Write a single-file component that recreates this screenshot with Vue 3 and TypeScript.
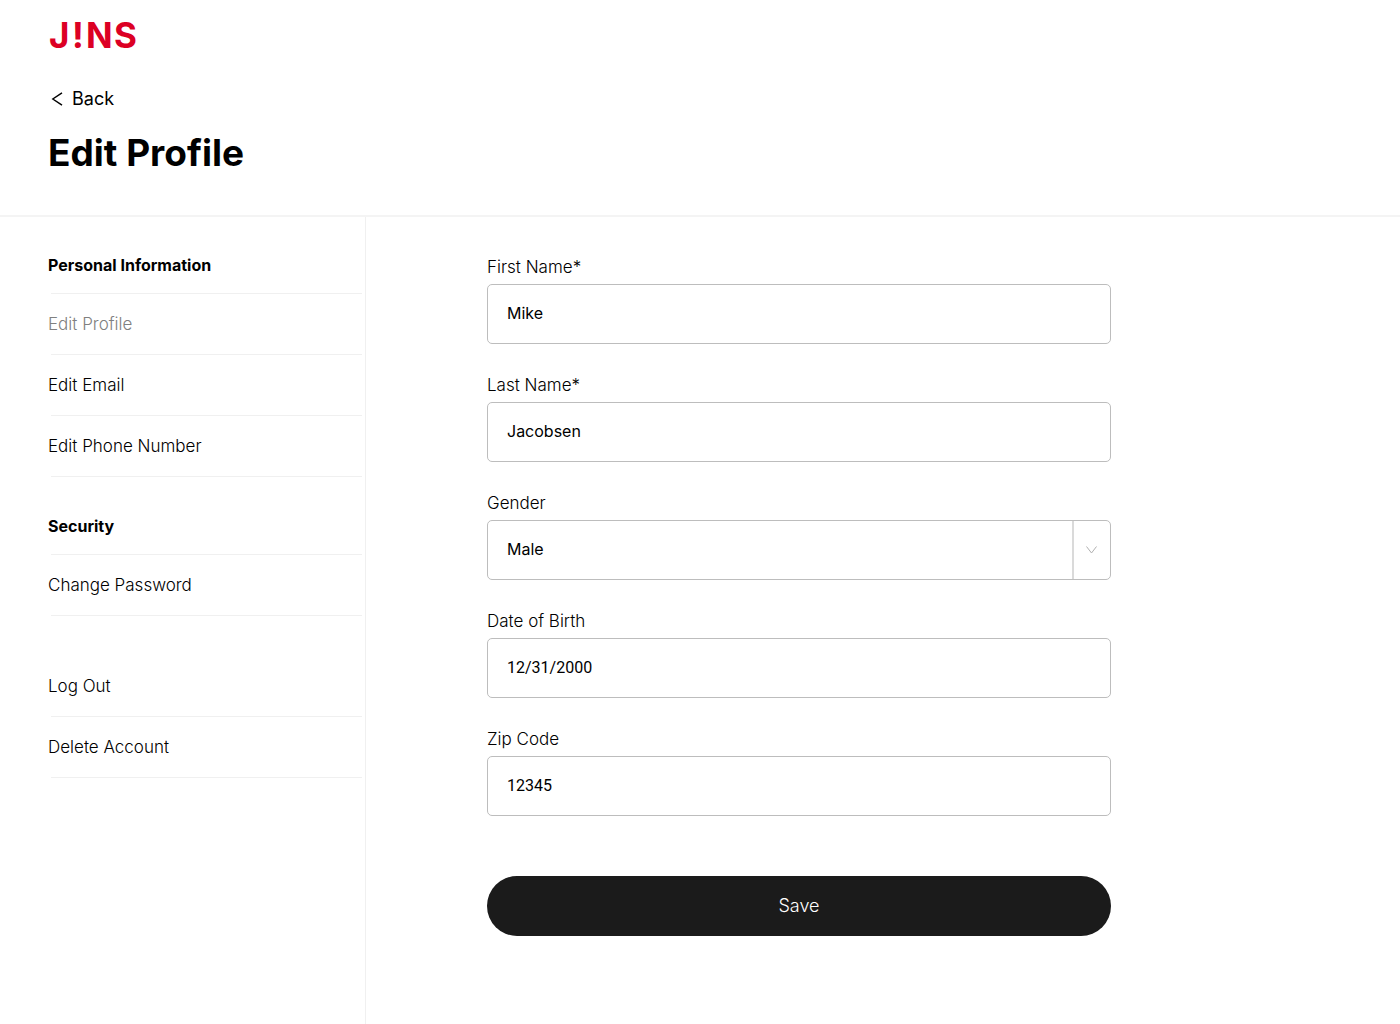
<script setup lang="ts">
import { ref } from 'vue'

interface MenuGroup {
  title?: string
  items: string[]
}

interface TextField {
  id: string
  label: string
  value: string
  numeric?: boolean
  options?: string[]
}

const active = 'Edit Profile'

const groups: MenuGroup[] = [
  { title: 'Personal Information', items: ['Edit Profile', 'Edit Email', 'Edit Phone Number'] },
  { title: 'Security', items: ['Change Password'] },
  { items: ['Log Out', 'Delete Account'] },
]

const fields = ref<TextField[]>([
  { id: 'first-name', label: 'First Name*', value: 'Mike' },
  { id: 'last-name', label: 'Last Name*', value: 'Jacobsen' },
  { id: 'gender', label: 'Gender', value: 'Male', options: ['Male', 'Female', 'Other'] },
  { id: 'birth-date', label: 'Date of Birth', value: '12/31/2000', numeric: true },
  { id: 'zip-code', label: 'Zip Code', value: '12345', numeric: true },
])
</script>

<template>
  <div class="page">
    <header class="header">
      <a class="logo" href="#" aria-label="JINS home">
        <svg width="96" height="48" viewBox="0 0 96 48" aria-hidden="true">
          <text y="37" x="1 24 38 66">J!NS</text>
        </svg>
      </a>
      <a class="back" href="#">
        <svg width="12" height="14" viewBox="0 0 12 14" fill="none" stroke="#000" stroke-width="1.4" aria-hidden="true">
          <path d="M11 .8 1.800 7l9.200 6.200" />
        </svg>
        <span>Back</span>
      </a>
      <h1>Edit Profile</h1>
    </header>

    <div class="body">
      <nav class="sidebar" aria-label="Account">
        <section v-for="(group, i) in groups" :key="i" class="group">
          <h2 v-if="group.title">{{ group.title }}</h2>
          <ul>
            <li v-for="item in group.items" :key="item">
              <a href="#" :class="{ active: item === active }">{{ item }}</a>
            </li>
          </ul>
        </section>
      </nav>

      <main class="content">
        <form class="form" @submit.prevent>
          <div v-for="field in fields" :key="field.id" class="field">
            <label :for="field.id">{{ field.label }}</label>
            <div v-if="field.options" class="select">
              <select :id="field.id" v-model="field.value">
                <option v-for="option in field.options" :key="option">{{ option }}</option>
              </select>
              <span class="arrow">
                <svg width="12" height="8" viewBox="0 0 12 8" fill="none" stroke="#b0b0b0" aria-hidden="true">
                  <path d="M.5 .5l5 6.500 5-6.500" />
                </svg>
              </span>
            </div>
            <input v-else :id="field.id" v-model="field.value" type="text" :class="{ numeric: field.numeric }" />
          </div>
          <button class="save" type="submit">Save</button>
        </form>
      </main>
    </div>
  </div>
</template>

<style>
body {
  background: #fff;
}
</style>

<style scoped>
.page {
  display: flex;
  flex-direction: column;
  min-height: 100vh;
  color: #000;
  font: 16px/24px Inter, "Liberation Sans", sans-serif;
}

.page *,
.page {
  box-sizing: border-box;
}

a {
  color: inherit;
  text-decoration: none;
}

.header {
  display: flex;
  flex-direction: column;
  align-items: flex-start;
  padding: 11px 48px 38px;
  border-bottom: 2px solid #f4f4f4;
}

.logo {
  display: block;
  height: 48px;
}

.logo text {
  fill: #dc0024;
  font: 700 35px Inter, sans-serif;
}

.back {
  display: flex;
  align-items: center;
  gap: 9px;
  margin-top: 28px;
  padding-left: 3px;
  font-size: 18px;
}

h1 {
  margin: 18px 0 0;
  font-size: 37px;
  line-height: 48px;
  font-weight: 700;
}

.body {
  display: flex;
  flex: 1;
}

.sidebar {
  flex: none;
  width: 366px;
  padding: 16px 3px 48px 48px;
  border-right: 1px solid #f0f0f0;
}

.group + .group {
  padding-top: 17px;
}

.group:last-child {
  padding-top: 40px;
}

h2 {
  margin: 0;
  padding-top: 20px;
  font-size: 16px;
  line-height: 24px;
  font-weight: 700;
}

h2::after,
li::after {
  content: "";
  display: block;
  height: 1px;
  margin-left: 3px;
  background: #f0f0f0;
}

h2::after {
  margin-top: 16px;
}

ul {
  margin: 0;
  padding: 0;
  list-style: none;
}

li a {
  display: block;
  padding: 18px 0;
  font-size: 17px;
  font-weight: 300;
}

li .active {
  color: #808080;
}

.content {
  flex: 1;
  padding: 38px 121px 88px;
}

.form {
  display: flex;
  flex-direction: column;
  gap: 29px;
  max-width: 624px;
}

.field {
  display: flex;
  flex-direction: column;
  gap: 5px;
}

label {
  font-size: 17px;
  font-weight: 300;
}

input,
select {
  width: 100%;
  height: 60px;
  margin: 0;
  padding: 0 19px 2px;
  border: 1px solid #bdbdbd;
  border-radius: 5px;
  background: #fff;
  color: #000;
  font: inherit;
  appearance: none;
}

.numeric {
  font-family: Roboto, sans-serif;
}

.select {
  display: grid;
}

.select > * {
  grid-area: 1 / 1;
}

.arrow {
  display: flex;
  align-items: center;
  justify-content: center;
  justify-self: end;
  width: 38px;
  margin: 1px 1px 1px 0;
  border-left: 2px solid #dadada;
  pointer-events: none;
}

.save {
  height: 60px;
  margin-top: 31px;
  border: 0;
  border-radius: 30px;
  background: #1b1b1b;
  color: #fff;
  font: inherit;
  font-size: 18px;
  font-weight: 300;
}
</style>
